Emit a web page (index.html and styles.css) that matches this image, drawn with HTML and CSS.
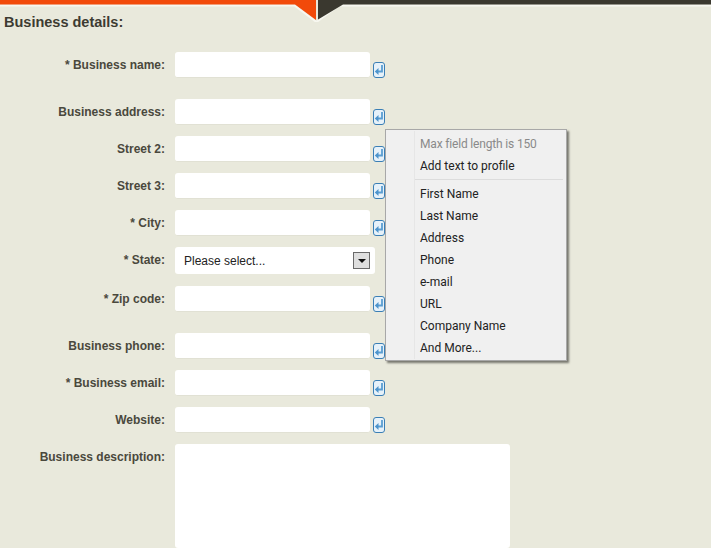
FILE: index.html
```html
<!DOCTYPE html>
<html lang="en">
<head>
<meta charset="utf-8">
<title>Business details</title>
<link rel="stylesheet" href="styles.css">
</head>
<body>
<svg class="topbar" width="711" height="22" viewBox="0 0 711 22" aria-hidden="true">
  <path d="M0 5.5H294.5L316.5 22L339 5.5H711" fill="none" stroke="#f7f7f0" stroke-width="2"/>
  <path d="M0 0H316V20L295 4.5H0Z" fill="#f24a0a"/>
  <path d="M318 0H711V4.5H343L318 19.5Z" fill="#3a382f"/>
</svg>
<h1 class="heading">Business details:</h1>
<form class="form">
  <div class="row row-loose"><label class="label">* Business name:</label><div class="input"></div><svg class="icon"><use href="#ret"/></svg></div>
  <div class="row"><label class="label">Business address:</label><div class="input"></div><svg class="icon"><use href="#ret"/></svg></div>
  <div class="row"><label class="label">Street 2:</label><div class="input"></div><svg class="icon"><use href="#ret"/></svg></div>
  <div class="row"><label class="label">Street 3:</label><div class="input"></div><svg class="icon"><use href="#ret"/></svg></div>
  <div class="row"><label class="label">* City:</label><div class="input"></div><svg class="icon"><use href="#ret"/></svg></div>
  <div class="row row-select"><label class="label">* State:</label><div class="select"><span>Please select...</span><span class="select-btn"><i class="caret"></i></span></div></div>
  <div class="row row-loose"><label class="label">* Zip code:</label><div class="input"></div><svg class="icon"><use href="#ret"/></svg></div>
  <div class="row"><label class="label">Business phone:</label><div class="input"></div><svg class="icon"><use href="#ret"/></svg></div>
  <div class="row"><label class="label">* Business email:</label><div class="input"></div><svg class="icon"><use href="#ret"/></svg></div>
  <div class="row"><label class="label">Website:</label><div class="input"></div><svg class="icon"><use href="#ret"/></svg></div>
  <div class="row row-area"><label class="label">Business description:</label><div class="textarea"></div></div>
</form>
<ul class="menu">
  <li class="menu-item menu-item-muted">Max field length is 150</li>
  <li class="menu-item">Add text to profile</li>
  <li class="menu-sep"></li>
  <li class="menu-item">First Name</li>
  <li class="menu-item">Last Name</li>
  <li class="menu-item">Address</li>
  <li class="menu-item">Phone</li>
  <li class="menu-item">e-mail</li>
  <li class="menu-item">URL</li>
  <li class="menu-item">Company Name</li>
  <li class="menu-item">And More...</li>
</ul>
<svg class="defs" width="0" height="0" aria-hidden="true">
  <symbol id="ret" viewBox="0 0 12 16">
    <rect x="0.5" y="0.5" width="11" height="15" rx="2.5" fill="#e6f1f9" stroke="#3b7fb5"/>
    <path d="M9 3V9.5H4" fill="none" stroke="#5a9ed2" stroke-width="1.8"/>
    <path d="M5.5 6L1.8 9.5L5.5 13Z" fill="#4c94cc"/>
  </symbol>
</svg>
</body>
</html>
```
FILE: styles.css
```css
html, body {
  margin: 0;
  padding: 0;
}
body {
  position: relative;
  width: 711px;
  height: 548px;
  overflow: hidden;
  background: #e9e9dc;
  font-family: "Liberation Sans", Arial, sans-serif;
}
.topbar {
  display: block;
}
.defs {
  position: absolute;
}
.heading {
  margin: -7px 0 0 4px;
  height: 15px;
  font-size: 14.5px;
  line-height: 15px;
  font-weight: bold;
  color: #3d3b32;
}
.form {
  margin-top: 22px;
}
.row {
  display: flex;
  align-items: flex-start;
  height: 26px;
  margin-bottom: 11px;
}
.row-loose {
  margin-bottom: 21px;
}
.row-select {
  height: 27px;
  margin-bottom: 12px;
}
.row-area {
  height: 104px;
  margin-bottom: 0;
}
.label {
  flex: none;
  width: 165px;
  margin-right: 10px;
  text-align: right;
  font-size: 12px;
  line-height: 14px;
  padding-top: 6px;
  font-weight: bold;
  color: #4a483d;
}
.input {
  flex: none;
  width: 195px;
  height: 25px;
  background: #fff;
  border-radius: 3px;
  border-bottom: 1px solid #e1e1d4;
}
.icon {
  flex: none;
  width: 12px;
  height: 16px;
  margin: 10px 0 0 3px;
}
.select {
  flex: none;
  display: flex;
  align-items: center;
  justify-content: space-between;
  box-sizing: border-box;
  width: 200px;
  height: 27px;
  padding: 0 5px 0 9px;
  background: #fff;
  border-radius: 3px;
  font-size: 12px;
  color: #222;
}
.select-btn {
  display: flex;
  align-items: center;
  justify-content: center;
  box-sizing: border-box;
  width: 17px;
  height: 17px;
  background: #dfdfdf;
  border: 1px solid #6a6a6a;
}
.caret {
  width: 0;
  height: 0;
  border-left: 4px solid transparent;
  border-right: 4px solid transparent;
  border-top: 4px solid #111;
}
.textarea {
  flex: none;
  width: 335px;
  height: 104px;
  background: #fff;
  border-radius: 3px;
}
.menu {
  position: absolute;
  left: 385px;
  top: 129px;
  box-sizing: border-box;
  width: 182px;
  height: 232px;
  margin: 0;
  padding: 3px 3px 2px 29px;
  list-style: none;
  background: #f0f0f0;
  border: 1px solid #a8a8a8;
  box-shadow: 2px 2px 2px #77776f;
  font-family: "Roboto", sans-serif;
  font-size: 12px;
  color: #222;
}
.menu::before {
  content: "";
  position: absolute;
  left: 28px;
  top: 1px;
  bottom: 1px;
  width: 1px;
  background: #e6e6e6;
}
.menu-item {
  height: 22px;
  line-height: 22px;
  padding-left: 5px;
  white-space: nowrap;
}
.menu-item-muted {
  color: #8a8a8a;
  letter-spacing: -0.17px;
}
.menu-sep {
  height: 1px;
  margin: 2px 0 3px;
  background: #dcdcdc;
}
```
